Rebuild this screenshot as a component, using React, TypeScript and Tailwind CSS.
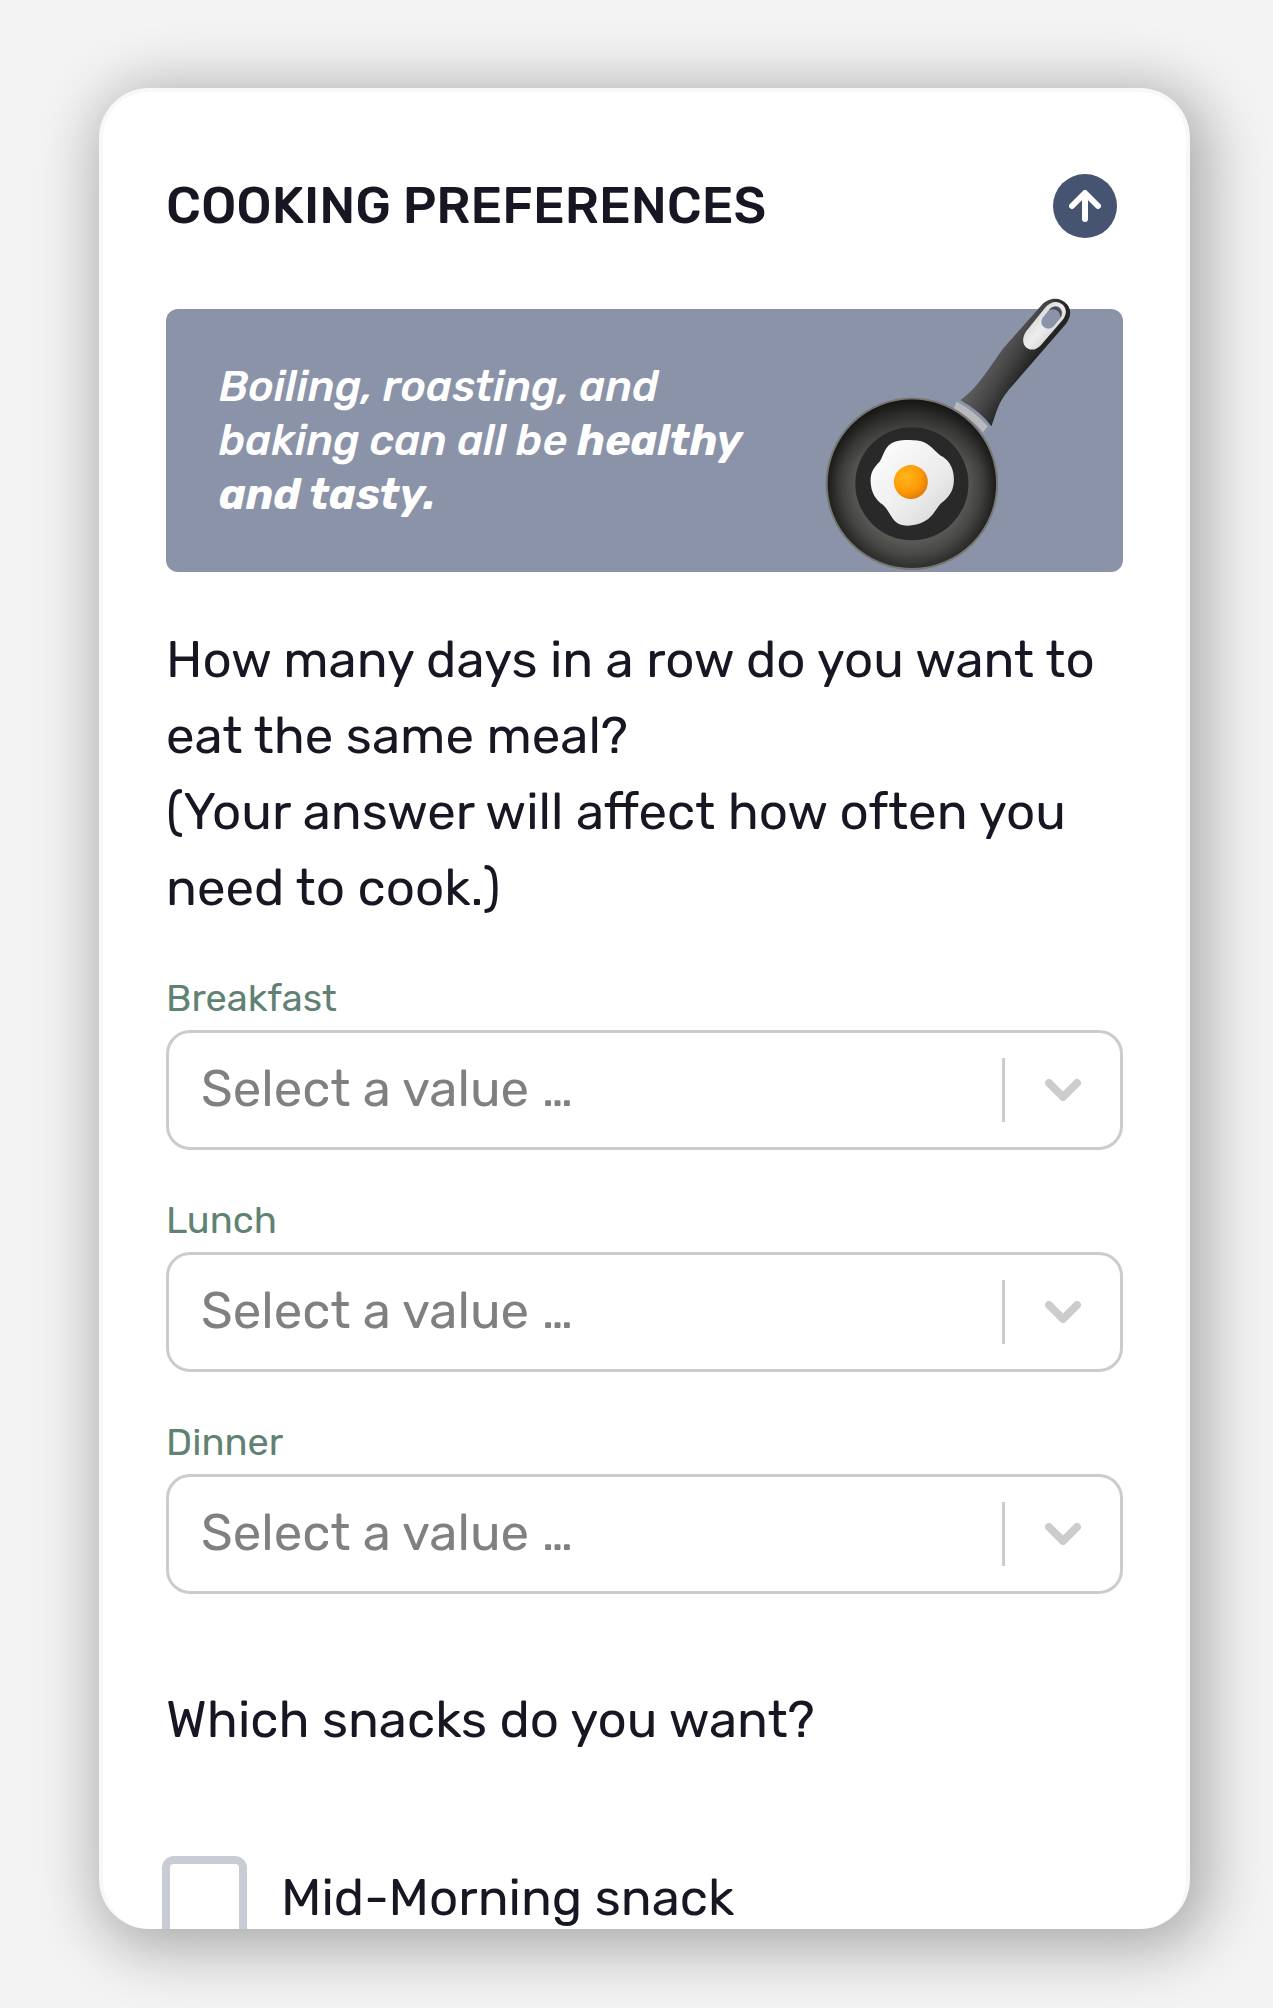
import { useState } from "react";

const meals = ["Breakfast", "Lunch", "Dinner"];

function FryingPan({ className }: { className: string }) {
  return (
    <svg viewBox="130 50 745 825" className={className} aria-hidden="true">
      <defs>
        <radialGradient id="panSide">
          <stop offset="0.64" stopColor="#61615e" />
          <stop offset="0.82" stopColor="#454543" />
          <stop offset="0.97" stopColor="#20201f" />
          <stop offset="1" stopColor="#1b1b1b" />
        </radialGradient>
        <linearGradient id="panShade" x1="0" y1="0" x2="0" y2="1">
          <stop offset="0" stopColor="#111" stopOpacity="0.55" />
          <stop offset="0.4" stopColor="#111" stopOpacity="0.1" />
          <stop offset="1" stopColor="#666660" stopOpacity="0.25" />
        </linearGradient>
        <linearGradient id="handle" x1="640" y1="210" x2="740" y2="270" gradientUnits="userSpaceOnUse">
          <stop offset="0" stopColor="#5c5c5c" />
          <stop offset="0.5" stopColor="#454545" />
          <stop offset="1" stopColor="#242424" />
        </linearGradient>
        <linearGradient id="metal" x1="0" y1="0" x2="1" y2="1">
          <stop offset="0" stopColor="#bdbdbd" />
          <stop offset="0.5" stopColor="#eeeeee" />
          <stop offset="1" stopColor="#b5b5b5" />
        </linearGradient>
        <linearGradient id="eggWhite" x1="0" y1="0" x2="1" y2="1">
          <stop offset="0" stopColor="#ffffff" />
          <stop offset="0.6" stopColor="#ececec" />
          <stop offset="1" stopColor="#d2d2d2" />
        </linearGradient>
        <radialGradient id="yolk" cx="0.36" cy="0.35" r="0.7">
          <stop offset="0" stopColor="#ffb61c" />
          <stop offset="0.6" stopColor="#ff9c05" />
          <stop offset="1" stopColor="#e07a08" />
        </radialGradient>
      </defs>
      <path d="M528 364 Q580 392 622 438 L608 456 Q570 412 520 384 Z" fill="#b9b9bb" />
      <path
        d="M540 360 C590 325 625 265 668 205 L782 76 C806 48 842 50 860 72 C876 92 870 112 856 132 L700 312 C650 365 650 395 633 438 Q600 393 540 360 Z"
        fill="url(#handle)"
      />
      <path
        d="M794 82 C812 60 836 60 850 76 C862 92 856 106 846 120 L782 194 C766 212 746 212 734 198 C724 184 728 166 738 152 Z"
        fill="url(#metal)"
      />
      <path d="M808 86 L787 112 C772 136 802 156 820 138 L840 114 C858 90 830 62 808 86 Z" fill="#8b93a8" />
      <path d="M806 89 C822 68 854 82 841 112 C838 90 824 82 806 89 Z" fill="#4a4d55" />
      <circle cx="394" cy="611" r="256" fill="url(#panSide)" stroke="#777773" strokeWidth="6" />
      <circle cx="394" cy="611" r="253" fill="url(#panShade)" />
      <circle cx="394" cy="611" r="170" fill="#292929" />
      <path
        d="M345 484 C372 478 410 478 432 487 C455 498 465 518 488 531 C510 546 522 572 520 604 C519 636 500 656 480 671 C464 690 455 712 432 724 C405 739 370 742 350 729 C331 716 325 690 307 674 C286 660 271 638 270 604 C269 575 282 560 297 545 C311 523 312 494 345 484 Z"
        fill="url(#eggWhite)"
      />
      <circle cx="391" cy="606" r="51" fill="url(#yolk)" />
    </svg>
  );
}

function MealSelect({ label }: { label: string }) {
  const id = label.toLowerCase();

  return (
    <div className="flex flex-col">
      <label htmlFor={id} className="text-[38px] leading-[64px] text-[#5f8273]">
        {label}
      </label>
      <div className="relative">
        <select
          id={id}
          defaultValue=""
          className="h-[120px] w-full appearance-none rounded-3xl border-3 border-[#cccccc] bg-white pr-[140px] pb-[2px] pl-8 text-[51px] text-[#808080]"
        >
          <option value="">Select a value …</option>
          <option value="1">1 day</option>
          <option value="2">2 days</option>
          <option value="3">3 days</option>
        </select>
        <div className="pointer-events-none absolute inset-y-0 right-0 flex items-center gap-10 pr-[42px]">
          <span className="h-16 w-[3px] bg-[#cccccc]" />
          <svg viewBox="0 0 36 22" className="w-9" fill="none" stroke="#cccccc" strokeWidth="8" strokeLinecap="round" strokeLinejoin="round" aria-hidden="true">
            <path d="M4 4 18 18 32 4" />
          </svg>
        </div>
      </div>
    </div>
  );
}

export default function App() {
  const [midMorning, setMidMorning] = useState(false);

  return (
    <div className="h-screen overflow-hidden bg-[#f3f3f3] pt-[88px] pr-[83px] pb-[79px] pl-[99px] font-[Rubik,Roboto,sans-serif] text-[#171623]">
      <main className="h-full overflow-hidden rounded-[50px] border-4 border-b-0 border-[#f8f8f8] bg-white px-[63px] pt-20 shadow-[8px_10px_60px_10px_rgba(0,0,0,0.3)]">
        <header className="flex items-center justify-between pr-[6px]">
          <h1 className="text-[51px] leading-[68px] font-medium">COOKING PREFERENCES</h1>
          <button type="button" aria-label="Back to top" className="flex size-16 items-center justify-center rounded-full bg-[#465472]">
            <svg viewBox="0 0 32 32" className="size-8" fill="none" stroke="white" strokeWidth="6" strokeLinecap="round" strokeLinejoin="round" aria-hidden="true">
              <path d="M16 29V4M3 16 16 3l13 13" />
            </svg>
          </button>
        </header>

        <section className="relative mt-[69px] h-[263px] rounded-xl bg-[#8b93a8] pt-[51px] pl-[53px]">
          <p className="text-[43px] leading-[54px] font-medium text-white italic">
            Boiling, roasting, and
            <br />
            baking can all be <strong className="font-bold">healthy</strong>
            <br />
            <strong className="font-bold">and tasty.</strong>
          </p>
          <FryingPan className="absolute right-[51px] bottom-0 w-[248px]" />
        </section>

        <p className="mt-[50px] text-[51px] leading-[76px]">
          How many days in a row do you want to eat the same meal?
          <br />
          (Your answer will affect how often you need to cook.)
        </p>

        <div className="mt-[40px] flex flex-col gap-[38px]">
          {meals.map((meal) => (
            <MealSelect key={meal} label={meal} />
          ))}
        </div>

        <h2 className="mt-[88px] text-[51px] leading-[76px]">Which snacks do you want?</h2>

        <label className="mt-[98px] -ml-1 flex items-center gap-[34px] text-[51px]">
          <input
            type="checkbox"
            checked={midMorning}
            onChange={(e) => setMidMorning(e.target.checked)}
            className="size-[85px] appearance-none rounded-xl border-8 border-[#c8ccd5] bg-white checked:bg-[#465472]"
          />
          Mid-Morning snack
        </label>
      </main>
    </div>
  );
}
